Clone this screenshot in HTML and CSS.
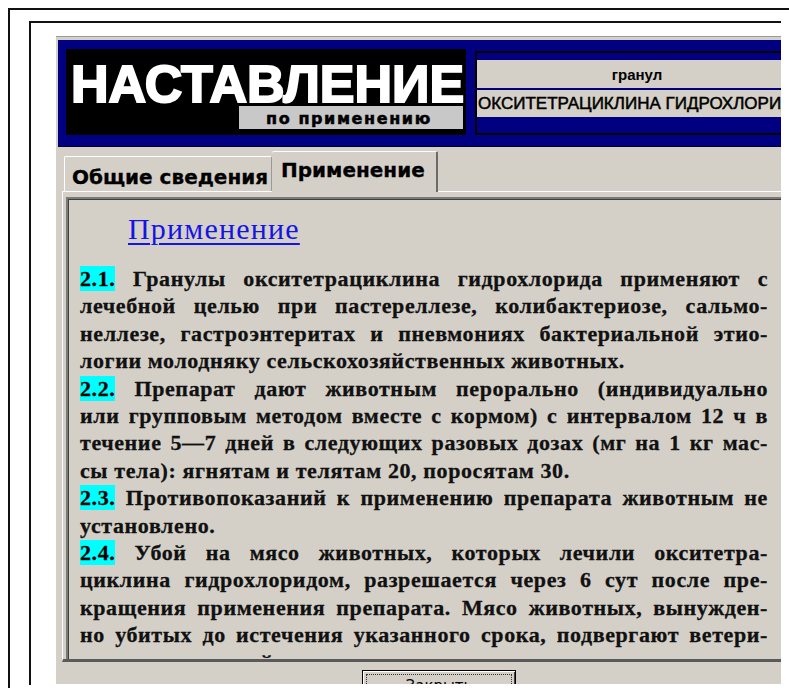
FILE: index.html
```html
<!DOCTYPE html>
<html lang="ru">
<head>
<meta charset="utf-8">
<title>Наставление по применению</title>
<link rel="stylesheet" href="styles.css">
</head>
<body>
<div class="sheet">
  <div class="sheet-inner">
    <div class="window">
      <header class="banner">
        <div class="title-block">
          <div class="title">НАСТАВЛЕНИЕ</div>
          <div class="subtitle">по применению</div>
        </div>
        <div class="drug-block">
          <div class="drug-row drug-form">гранул</div>
          <div class="drug-row drug-name">ОКСИТЕТРАЦИКЛИНА ГИДРОХЛОРИДА</div>
        </div>
      </header>

      <nav class="tabs">
        <div class="tab">Общие сведения</div>
        <div class="tab tab-active">Применение</div>
      </nav>

      <div class="tab-body">
        <article class="page">
          <h1 class="page-title"><a href="#">Применение</a></h1>

          <p class="para">
            <span class="ln"><mark class="num">2.1.</mark> Гранулы окситетрациклина гидрохлорида применяют с</span>
            <span class="ln">лечебной целью при пастереллезе, колибактериозе, сальмо-</span>
            <span class="ln">неллезе, гастроэнтеритах и пневмониях бактериальной этио-</span>
            <span class="ln ln-end">логии молодняку сельскохозяйственных животных.</span>
          </p>
          <p class="para">
            <span class="ln"><mark class="num">2.2.</mark> Препарат дают животным перорально (индивидуально</span>
            <span class="ln">или групповым методом вместе с кормом) с интервалом 12 ч в</span>
            <span class="ln">течение 5—7 дней в следующих разовых дозах (мг на 1 кг мас-</span>
            <span class="ln ln-end">сы тела): ягнятам и телятам 20, поросятам 30.</span>
          </p>
          <p class="para">
            <span class="ln"><mark class="num">2.3.</mark> Противопоказаний к применению препарата животным не</span>
            <span class="ln ln-end">установлено.</span>
          </p>
          <p class="para">
            <span class="ln"><mark class="num">2.4.</mark> Убой на мясо животных, которых лечили окситетра-</span>
            <span class="ln">циклина гидрохлоридом, разрешается через 6 сут после пре-</span>
            <span class="ln">кращения применения препарата. Мясо животных, вынужден-</span>
            <span class="ln">но убитых до истечения указанного срока, подвергают ветери-</span>
            <span class="ln">нарно-санитарной экспертизе и в зависимости от ее итогов — на</span>
            <span class="ln ln-end">переработку.</span>
          </p>
        </article>
      </div>

      <footer class="actions">
        <button class="btn" type="button"><span class="btn-label">Закрыть</span></button>
      </footer>
    </div>
  </div>
</div>
</body>
</html>
```

FILE: styles.css
```css
* {
  box-sizing: border-box;
}

html,
body {
  margin: 0;
  padding: 0;
}

body {
  width: 789px;
  height: 691px;
  overflow: hidden;
  background: #ffffff;
  font-family: "Liberation Sans", Arial, sans-serif;
}

/* two nested page frames around the window */
.sheet {
  margin: 8px 0 0 8px;
  height: 680px;
  border-top: 2px solid #111;
  border-left: 2px solid #111;
  padding: 11px 0 0 19px;
}

.sheet-inner {
  width: 752px;
  height: 664px;
  border-top: 2px solid #111;
  border-left: 2px solid #111;
  padding: 13px 0 0 25px;
}

/* the application window, cut off on the right */
.window {
  width: 725px;
  height: 648px;
  overflow: hidden;
  background: #d4d0c8;
  border-top: 1px solid #9a9a9a;
  padding-top: 3px;
}

/* ---------- banner ---------- */
.banner {
  display: flex;
  align-items: flex-start;
  width: 760px;
  height: 107px;
  margin-left: 2px;
  padding: 9px 0 0 8px;
  background: #000080;
  border-bottom: 1px solid #000030;
}

.title-block {
  display: flex;
  flex-direction: column;
  flex: none;
  width: 400px;
  height: 86px;
  padding: 0 3px 6px 0;
  background: #000;
}

.title {
  height: 55px;
  padding: 15px 0 0 5px;
  color: #fff;
  font-family: "Liberation Sans", Arial, sans-serif;
  font-weight: 700;
  font-size: 52px;
  line-height: 40px;
  letter-spacing: 0;
  -webkit-text-stroke: 2px #fff;
  white-space: nowrap;
}

.subtitle {
  align-self: flex-end;
  margin-top: auto;
  width: 224px;
  height: 23px;
  padding: 4px 0 0 27px;
  background: #c8c8c8;
  color: #000;
  font-family: "DejaVu Sans", sans-serif;
  font-weight: 700;
  font-size: 16px;
  line-height: 17px;
  letter-spacing: 1.6px;
  -webkit-text-stroke: 0.5px #000;
  white-space: nowrap;
}

.drug-block {
  flex: none;
  width: 324px;
  height: 84px;
  margin: 2px 0 0 9px;
  padding-top: 7px;
  border: 2px solid #000;
  background: #000080;
}

.drug-row {
  background: #d4d0c8;
  color: #000;
  white-space: nowrap;
  overflow: hidden;
}

.drug-form {
  height: 28px;
  text-align: center;
  font-weight: 700;
  font-size: 15px;
  line-height: 29px;
}

.drug-name {
  height: 27px;
  margin-top: 2px;
  padding-left: 1px;
  font-size: 17px;
  line-height: 27px;
  -webkit-text-stroke: 0.5px #000;
  letter-spacing: 0;
}

/* ---------- tabs ---------- */
.tabs {
  display: flex;
  align-items: flex-end;
  height: 44px;
  padding-left: 8px;
  position: relative;
  z-index: 1;
  font-family: "DejaVu Sans", Verdana, sans-serif;
  font-weight: 700;
  font-size: 20px;
  color: #000;
  -webkit-text-stroke: 0.3px #000;
}

.tab {
  height: 35px;
  width: 208px;
  padding: 8px 0 0 7px;
  border-top: 1px solid #fff;
  border-left: 1px solid #fff;
  border-right: 1px solid #9a9a9a;
  border-radius: 2px 2px 0 0;
  line-height: 24px;
  white-space: nowrap;
}

.tab-active {
  width: 166px;
  height: 41px;
  margin-bottom: -1px;
  padding: 6px 0 0 9px;
  border-left: none;
  border-right: 2px solid #6a6a6a;
  background: #d4d0c8;
}

/* ---------- tab body ---------- */
.tab-body {
  width: 760px;
  margin-left: 6px;
  padding: 5px 0 0 3px;
  border-top: 1px solid #fff;
  border-left: 1px solid #fff;
  border-bottom: 3px solid #5a5a5a;
}

.page {
  height: 462px;
  overflow: hidden;
  border-top: 2px solid #7a7a7a;
  border-left: 2px solid #7a7a7a;
  box-shadow: inset 1px 1px 0 #404040;
  padding: 14px 0 0 12px;
  font-family: "Liberation Serif", "Times New Roman", serif;
  color: #111;
}

.page-title {
  margin: 0 0 20px 48px;
  font-weight: 400;
  font-size: 30px;
  line-height: 32px;
  letter-spacing: 1.2px;
}

.page-title a {
  color: #1414e6;
  text-decoration: underline;
  text-decoration-thickness: 2px;
  text-underline-offset: 4px;
}

.para {
  width: 688px;
  margin: 0;
  font-weight: 700;
  font-size: 22px;
  line-height: 27.4px;
  letter-spacing: 0.6px;
  -webkit-text-stroke: 0.3px #111;
}

.ln {
  display: block;
  white-space: nowrap;
  text-align: justify;
  text-align-last: justify;
}

.ln-end {
  text-align-last: left;
}

.num {
  background: #00ffff;
  color: #000;
  padding: 0;
}

/* ---------- bottom button ---------- */
.actions {
  padding: 8px 0 0 306px;
}

.btn {
  display: block;
  width: 154px;
  height: 30px;
  padding: 3px;
  border: 1px solid #000;
  background: #d4d0c8;
  box-shadow: inset 1px 1px 0 #fff, inset -1px -1px 0 #404040;
  font-family: "DejaVu Sans", Tahoma, sans-serif;
  font-size: 15px;
  color: #000;
}

.btn-label {
  display: block;
  height: 22px;
  padding-top: 1px;
  border: 1px dotted #333;
  line-height: 20px;
  text-align: center;
}
```
